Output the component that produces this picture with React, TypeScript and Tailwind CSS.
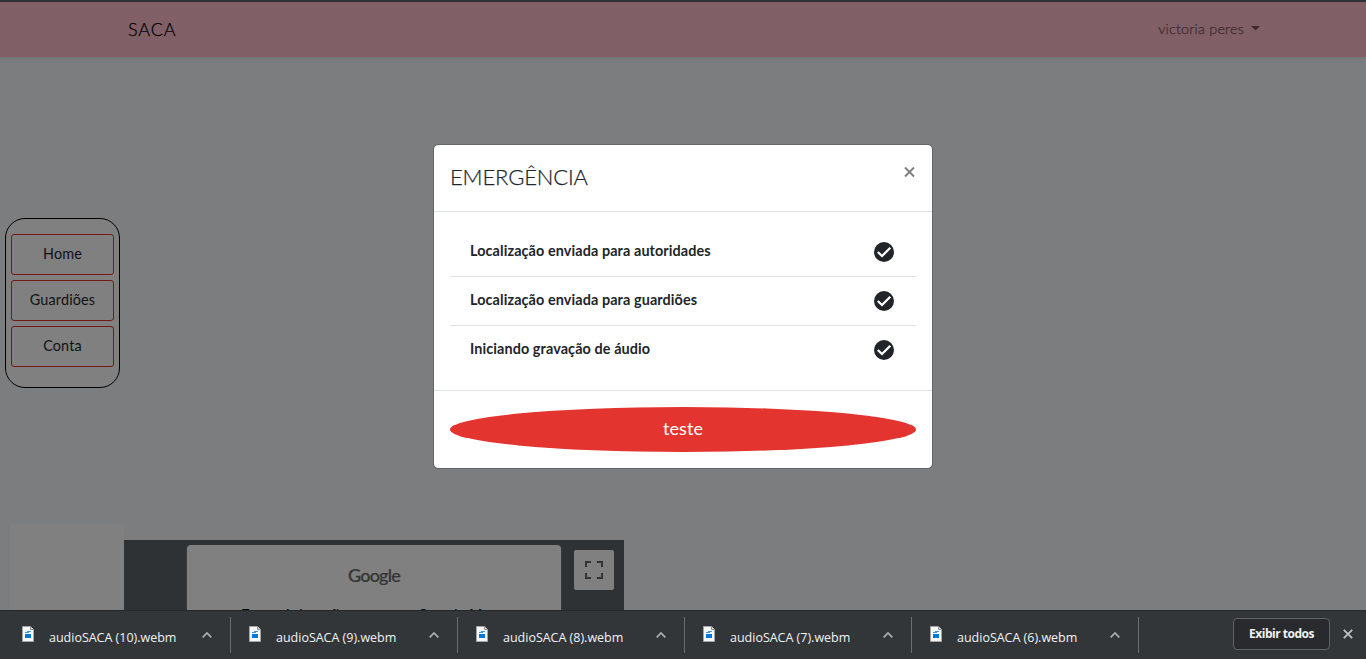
import React from "react";

const downloads = ["audioSACA (10).webm", "audioSACA (9).webm", "audioSACA (8).webm", "audioSACA (7).webm", "audioSACA (6).webm"];

function FileIcon() {
  return (
    <svg width="12" height="16" viewBox="0 0 12 16" className="shrink-0">
      <path d="M.5.5h8l3 3v12H.5z" fill="#f7f7f7" stroke="#a5a5a5" />
      <path d="M8.5.5v3h3" fill="#ddd" stroke="#8d8d8d" />
      <path d="M3 8h6v4H3z" fill="#0078d7" />
      <path d="M3 6h2V5h4v1H7v1H3z" fill="#3b97e0" />
    </svg>
  );
}

function Check() {
  return (
    <svg width="20" height="20" viewBox="0 0 20 20">
      <circle cx="10" cy="10" r="10" fill="#212529" />
      <path d="M3.8 10l4.2 4 8.3-8.2" fill="none" stroke="#fff" strokeWidth="2.3" />
    </svg>
  );
}

function DownloadItem({ name }: { name: string }) {
  return (
    <div className="flex h-9 w-[227px] shrink-0 items-center border-r border-[#6b6e71] pl-[18px] pr-[18px]">
      <div className="-mt-[3px]"><FileIcon /></div>
      <span className="ml-[15px] w-[128px] whitespace-nowrap pt-[5px] font-['Open_Sans',sans-serif] text-[12.5px] leading-4 tracking-[-0.01px] text-[#f1f3f4]">{name}</span>
      <svg className="ml-auto" width="10" height="6" viewBox="0 0 10 6"><path d="M.7 5.3L5 1l4.3 4.3" fill="none" stroke="#aeb1b4" strokeWidth="1.7" /></svg>
    </div>
  );
}

export default function App() {
  return (
    <div className="relative flex h-[659px] w-[1366px] flex-col overflow-hidden bg-[#7c7d7e] font-[Lato,sans-serif]">
      <header className="flex h-[57px] shrink-0 items-center justify-between border-t-2 border-[#2d3335] bg-[#806066] pl-32 pr-[106px] shadow-[0_2px_4px_rgba(0,0,0,0.06)]">
        <span className="pb-0.5 text-[18px] font-light leading-none tracking-[0.9px] text-black [-webkit-text-stroke:0.25px_black]">SACA</span>
        <span className="flex items-center pb-0.5 text-[14.4px] font-light tracking-[0.2px] text-[#40282d] [-webkit-text-stroke:0.25px_#40282d]">
          victoria peres
          <svg className="ml-[7px]" width="9" height="5" viewBox="0 0 9 5"><path d="M0 0h9L4.5 4.5z" fill="#40282d" /></svg>
        </span>
      </header>

      <main className="flex h-[553px] shrink-0 flex-col pt-[161px]">
        <nav className="ml-[5px] flex h-[170px] w-[115px] flex-col gap-[5px] rounded-[20px] border border-black bg-[#808080] px-[5px] pt-[15px]">
          {["Home", "Guardiões", "Conta"].map((item) => (
            <button key={item} className="h-[41px] w-full rounded-[3px] border border-[#721a18] pb-0.5 text-[14.4px] font-normal tracking-[0.15px] text-[#101214]">{item}</button>
          ))}
        </nav>
        <div className="mt-[136px] flex h-[86px] items-end pl-2.5">
          <div className="h-full w-[114px] bg-[#808080]" />
          <div className="flex h-[70px] w-[500px] justify-end gap-[13px] bg-[#2e3235] pr-2.5 pt-[5px]">
            <div className="h-[80px] w-[374px] rounded-[4px] bg-[#808080] text-center shadow-[0_1px_2px_#555]">
              <div className="pt-[19px] text-[18px] font-medium leading-[22px] tracking-[-0.75px] text-[#353535] [-webkit-text-stroke:0.2px_#353535]">Google</div>
              <div className="mt-[19px] whitespace-nowrap pl-[54px] text-left font-[Roboto,sans-serif] text-[15px] leading-5 text-black">Esta página não carrega o Google Maps</div>
            </div>
            <div className="mt-[5px] flex size-10 items-center justify-center rounded-[2px] bg-[#808080]">
              <svg width="18" height="18" viewBox="0 0 18 18"><path d="M1 6V1h5M12 1h5v5M17 12v5h-5M6 17H1v-5" fill="none" stroke="#333" strokeWidth="2" /></svg>
            </div>
          </div>
        </div>
      </main>

      <footer className="relative flex h-[49px] shrink-0 items-start border-t border-[#25282a] bg-[#323639] pl-1 pt-1.5">
        {downloads.map((name) => <DownloadItem key={name} name={name} />)}
        <button className="ml-[94px] mt-px h-8 w-[97px] rounded-[4px] border border-[#5f6368] bg-[#292a2d] font-['Open_Sans',sans-serif] text-[12px] font-bold tracking-[-0.5px] text-[#f1f3f4]">Exibir todos</button>
        <svg className="ml-[13px] mt-3" width="10" height="10" viewBox="0 0 10 10"><path d="M.8.8l8.4 8.4M9.2.8L.8 9.2" stroke="#bec1c4" strokeWidth="1.8" /></svg>
      </footer>

      <section role="dialog" className="absolute left-[433px] top-[144px] flex h-[325px] w-[500px] flex-col rounded-[5px] border border-[#646566] bg-white bg-clip-padding text-[#212529]">
        <header className="flex h-[67px] shrink-0 justify-between border-b border-[#dee2e6] px-4 pt-4">
          <h5 className="text-[22px] font-light leading-8 tracking-[-0.15px] [-webkit-text-stroke:0.25px_#212529]">EMERGÊNCIA</h5>
          <svg className="mr-px mt-[6px]" width="11" height="11" viewBox="0 0 11 11"><path d="M1 .5l9 9M10 .5l-9 9" stroke="#7f7f7f" strokeWidth="2" /></svg>
        </header>
        <ul className="h-[179px] shrink-0 border-b border-[#dee2e6] px-4 pt-4">
          {["Localização enviada para autoridades", "Localização enviada para guardiões", "Iniciando gravação de áudio"].map((text) => (
            <li key={text} className="flex h-[49px] items-center justify-between border-b border-[#dee2e6] pl-5 pr-[22px] text-[14.4px] font-bold tracking-[0.1px] last:h-12 last:border-0">
              <span className="pb-0.5">{text}</span><Check />
            </li>
          ))}
        </ul>
        <div className="px-4 pt-4">
          <button className="h-[45px] w-full rounded-[50%] bg-[#e3342f] pb-0.5 text-[18px] tracking-[0.1px] text-white">teste</button>
        </div>
      </section>
    </div>
  );
}
